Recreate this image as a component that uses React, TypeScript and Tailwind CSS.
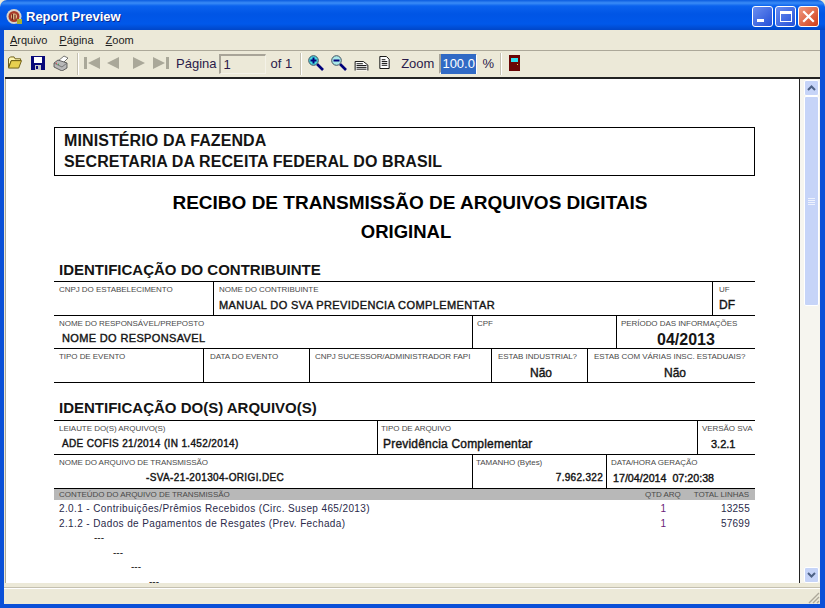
import type { ReactNode } from 'react';

function WindowButton({ className, children }: { className: string; children: ReactNode }) {
  return (
    <div className={`flex h-[21px] w-[21px] items-center justify-center rounded-[3px] border border-white ${className}`}>
      {children}
    </div>
  );
}

function TitleBar() {
  return (
    <div className="flex h-[30px] shrink-0 items-center rounded-t-[7px] bg-[linear-gradient(180deg,#0a5be0_0px,#3a8cf6_3px,#0a62ee_6px,#0055e5_14px,#0058ea_24px,#0046c8_30px)] pt-[2px] pr-[6px] pl-[6px]">
      <svg width="17" height="17" viewBox="0 0 17 17">
        <circle cx="8" cy="8.5" r="7.5" fill="#d8d4cc" />
        <circle cx="8" cy="8.5" r="5.5" fill="#a83a28" />
        <circle cx="8" cy="8.5" r="3" fill="#e8c890" />
        <path d="M6.5 6v6M9 6.5v5" stroke="#6a2018" strokeWidth="1.2" />
        <rect x="11" y="11" width="5" height="5" fill="#a8b030" />
      </svg>
      <span className="mt-[1px] ml-[3px] text-[13px] font-bold text-white [text-shadow:1px_1px_0_#0a2a90]">Report Preview</span>
      <div className="ml-auto flex gap-[2px]">
        <WindowButton className="bg-[linear-gradient(135deg,#6a8ef0,#2450d8)]">
          <div className="mt-[8px] mr-[5px] h-[3px] w-[7px] bg-white" />
        </WindowButton>
        <WindowButton className="bg-[linear-gradient(135deg,#6a8ef0,#2450d8)]">
          <div className="h-[11px] w-[12px] border border-t-[3px] border-white" />
        </WindowButton>
        <WindowButton className="bg-[linear-gradient(135deg,#f09a80,#d03c18)]">
          <svg width="13" height="13" viewBox="0 0 13 13">
            <path d="M2 2l9 9M11 2l-9 9" stroke="#fff" strokeWidth="2.2" strokeLinecap="square" />
          </svg>
        </WindowButton>
      </div>
    </div>
  );
}

function MenuItem({ first, rest }: { first: string; rest: string }) {
  return (
    <span className="text-[11px] text-[#1c1c1c]">
      <span className="underline">{first}</span>
      {rest}
    </span>
  );
}

function Separator({ ml, mr }: { ml: string; mr: string }) {
  return <div className={`h-[22px] w-[2px] border-x border-l-[#c4c0b0] border-r-white ${ml} ${mr}`} />;
}

function FolderIcon() {
  return (
    <svg width="16" height="13" viewBox="0 0 16 14">
      <path d="M1 3l2-2h4l1 2h6v2H4L1 12z" fill="#fff6b0" stroke="#6a5a10" />
      <path d="M1 13l3-8h11l-3 8z" fill="#e8d050" stroke="#6a5a10" />
    </svg>
  );
}

function SaveIcon() {
  return (
    <svg width="14" height="14" viewBox="0 0 14 14">
      <rect width="14" height="14" fill="#08087a" />
      <rect x="3" y="1" width="8" height="6" fill="#fff" />
      <rect x="4" y="9" width="6" height="5" fill="#c8c8c8" />
      <rect x="5" y="10" width="2" height="3" fill="#08087a" />
    </svg>
  );
}

function PrintIcon() {
  return (
    <svg width="16" height="16" viewBox="0 0 16 16">
      <path d="M5 6l6-5 4 2-5 5z" fill="#fff" stroke="#555" strokeWidth="0.8" />
      <path d="M1 8l4-3 9 3v5l-5 3-8-4z" fill="#b8b8b8" stroke="#444" strokeWidth="0.8" />
      <path d="M1 8l8 4 5-4" fill="none" stroke="#666" strokeWidth="0.8" />
      <path d="M3 8l1 .5" stroke="#e04040" />
      <path d="M5 9l1 .5" stroke="#30a040" />
    </svg>
  );
}

function NavIcon({ points, bar }: { points: string; bar?: number }) {
  return (
    <svg width="16" height="12" viewBox="0 0 16 13" preserveAspectRatio="none">
      {bar !== undefined && <rect x={bar} y="0" width="3" height="13" fill="#aaa899" />}
      <polygon points={points} fill="#aaa899" />
    </svg>
  );
}

function MagnifierIcon({ minus }: { minus?: boolean }) {
  return (
    <svg width="16" height="16" viewBox="0 0 16 16">
      <path d="M9 9l6 6" stroke="#00007a" strokeWidth="2.6" />
      <circle cx="5.5" cy="5.5" r="4.8" fill={minus ? '#a8e8e8' : '#48d8e0'} stroke="#405060" />
      <rect x="2.5" y="4.5" width="6" height="2" fill="#00007a" />
      {!minus && <rect x="4.5" y="2.5" width="2" height="6" fill="#00007a" />}
    </svg>
  );
}

function PageWidthIcon() {
  return (
    <svg width="15" height="10" viewBox="0 0 15 11">
      <path d="M.5 10.5V.5h9l5 4v6" fill="#fff" stroke="#000" />
      <path d="M2 3h7M2 5h11M2 7h11M2 9h11" stroke="#000" />
    </svg>
  );
}

function PageIcon() {
  return (
    <svg width="11" height="13" viewBox="0 0 11 14">
      <path d="M.5.5h7l3 3v10H.5z" fill="#fff" stroke="#000" />
      <path d="M2.5 4h4M2.5 6h6M2.5 8h6M2.5 10h6" stroke="#000" />
    </svg>
  );
}

function DoorIcon() {
  return (
    <svg width="11" height="16" viewBox="0 0 11 16">
      <rect width="11" height="16" fill="#6a0505" />
      <rect x="2" y="3" width="7" height="4" fill="#30e0f0" />
      <rect x="8" y="9" width="1" height="1" fill="#f0d040" />
    </svg>
  );
}

function Toolbar() {
  return (
    <div className="flex h-[27px] shrink-0 items-center border-t border-[#aca899] text-[13px] text-[#2a1a4a]">
      <div className="mb-[3px] ml-[3px] flex w-[16px] justify-center"><FolderIcon /></div>
      <div className="mb-[3px] ml-[8px] flex w-[14px] justify-center"><SaveIcon /></div>
      <div className="mb-[2px] ml-[8px]"><PrintIcon /></div>
      <Separator ml="ml-[8px]" mr="mr-[5px]" />
      <div className="mb-[3px]"><NavIcon points="16,0 16,13 4,6.5" bar={0} /></div>
      <div className="mb-[3px] ml-[5px]"><NavIcon points="14,0 14,13 2,6.5" /></div>
      <div className="mb-[3px] ml-[10px]"><NavIcon points="2,0 2,13 14,6.5" /></div>
      <div className="mb-[3px] ml-[6px]"><NavIcon points="0,0 0,13 12,6.5" bar={13} /></div>
      <span className="ml-[7px]">Página</span>
      <div className="ml-[3px] flex h-[20px] w-[47px] items-center border border-t-[2px] border-l-[2px] border-[#a8a498] border-r-[#f4f2e8] border-b-[#f4f2e8] pl-[2px]">1</div>
      <span className="ml-[4px]">of 1</span>
      <Separator ml="ml-[8px]" mr="mr-[6px]" />
      <div className="mb-[3px]"><MagnifierIcon /></div>
      <div className="mb-[3px] ml-[7px]"><MagnifierIcon minus /></div>
      <div className="mt-[4px] ml-[7px]"><PageWidthIcon /></div>
      <div className="mb-[3px] ml-[10px]"><PageIcon /></div>
      <span className="ml-[11px]">Zoom</span>
      <div className="ml-[5px] flex h-[20px] w-[38px] items-center border-2 border-[#a8a498] border-r-white border-b-white bg-white">
        <span className="bg-[#316ac5] px-[1px] text-white">100.0</span>
      </div>
      <span className="ml-[5px]">%</span>
      <Separator ml="ml-[6px]" mr="mr-[7px]" />
      <div className="mb-[2px]"><DoorIcon /></div>
    </div>
  );
}

function Cell({
  label,
  width,
  last,
  children,
  labelClass = 'pl-[5px]',
}: {
  label: string;
  width: string;
  last?: boolean;
  children?: ReactNode;
  labelClass?: string;
}) {
  return (
    <div className={`flex h-full flex-col ${width} ${last ? '' : 'border-r border-black'}`}>
      <div className={`mt-[3px] h-[10px] text-[8px] leading-[10px] tracking-[-0.05px] whitespace-nowrap text-[#4a4a4a] ${labelClass}`}>{label}</div>
      {children}
    </div>
  );
}

function Value({ className, children }: { className: string; children: ReactNode }) {
  return <div className={`whitespace-nowrap text-[#141414] [-webkit-text-stroke:0.4px_#141414] ${className}`}>{children}</div>;
}

function ArrowButton({ up }: { up?: boolean }) {
  return (
    <div className="flex h-[16px] w-[15px] items-center justify-center rounded-[2px] border border-white bg-[#c6d4f8]">
      <svg width="9" height="6" viewBox="0 0 9 6">
        <path d={up ? 'M1 5l3.5-3.5L8 5' : 'M1 1l3.5 3.5L8 1'} fill="none" stroke="#4d6185" strokeWidth="2" />
      </svg>
    </div>
  );
}

function Scrollbar() {
  return (
    <div className="flex w-[21px] shrink-0 flex-col border-l border-[#222] bg-[#f6f5ef] pt-[1px] pl-[4px]">
      <ArrowButton up />
      <div className="flex h-[210px] w-[15px] flex-col items-center justify-center gap-[1px] rounded-[2px] border border-white bg-[#c6d4f8]">
        <div className="h-[1px] w-[7px] bg-[#eef2fe]" />
        <div className="h-[1px] w-[7px] bg-[#eef2fe]" />
        <div className="h-[1px] w-[7px] bg-[#eef2fe]" />
        <div className="h-[1px] w-[7px] bg-[#eef2fe]" />
      </div>
      <div className="flex-1" />
      <ArrowButton />
    </div>
  );
}

function ContentRow({ text, qty, total }: { text: string; qty: string; total: string }) {
  return (
    <div className="flex h-[14.5px] items-center pl-[5px] text-[10px] whitespace-nowrap text-[#2a2a4a]">
      <span className="tracking-[0.38px]">{text}</span>
      <span className="ml-auto text-[#6a1a7a]">{qty}</span>
      <span className="mr-[5px] ml-[55px] tracking-[0.25px]">{total}</span>
    </div>
  );
}

function Report() {
  return (
    <div className="w-[701px] pt-[48px] leading-none">
      <div className="flex h-[49px] flex-col justify-center border border-black pb-[1px] pl-[9px] text-[16px] leading-[21px] font-bold tracking-[0.1px] text-[#141414]">
        <div>MINISTÉRIO DA FAZENDA</div>
        <div>SECRETARIA DA RECEITA FEDERAL DO BRASIL</div>
      </div>
      <div className="mt-[12px] text-center text-[19px] leading-[29px] font-bold text-black">
        <div className="pl-[11px]">RECIBO DE TRANSMISSÃO DE ARQUIVOS DIGITAIS</div>
        <div className="pl-[3px] text-[18.5px]">ORIGINAL</div>
      </div>

      <div className="mt-[15px] h-[20px] pl-[5px] text-[15px] leading-[18px] font-bold text-[#141414]">IDENTIFICAÇÃO DO CONTRIBUINTE</div>
      <div className="flex h-[34px] border-t border-black">
        <Cell label="CNPJ DO ESTABELECIMENTO" width="w-[160px]" />
        <Cell label="NOME DO CONTRIBUINTE" width="w-[499px]">
          <Value className="mt-[3px] pl-[5px] text-[11px] leading-[14px] tracking-[0.4px]">MANUAL DO SVA PREVIDENCIA COMPLEMENTAR</Value>
        </Cell>
        <Cell label="UF" width="w-[42px]" last labelClass="pl-[6px]">
          <Value className="mt-[3px] pl-[6px] text-[12px] leading-[14px]">DF</Value>
        </Cell>
      </div>
      <div className="flex h-[33px] border-t border-black">
        <Cell label="NOME DO RESPONSÁVEL/PREPOSTO" width="w-[419px]">
          <Value className="mt-[2px] pl-[8px] text-[11px] leading-[14px] tracking-[0.35px]">NOME DO RESPONSAVEL</Value>
        </Cell>
        <Cell label="CPF" width="w-[144px]" labelClass="pl-[4px]" />
        <Cell label="PERÍODO DAS INFORMAÇÕES" width="w-[138px]" last labelClass="pl-[4px]">
          <div className="mt-[2px] pl-[40px] text-[16px] leading-[18px] font-bold text-[#141414]">04/2013</div>
        </Cell>
      </div>
      <div className="flex h-[35px] border-y border-black">
        <Cell label="TIPO DE EVENTO" width="w-[150px]" />
        <Cell label="DATA DO EVENTO" width="w-[106px]" labelClass="pl-[6px]" />
        <Cell label="CNPJ SUCESSOR/ADMINISTRADOR FAPI" width="w-[182px]" labelClass="pl-[5px]" />
        <Cell label="ESTAB INDUSTRIAL?" width="w-[96px]" labelClass="pl-[6px]">
          <Value className="mt-[4px] pl-[38px] text-[12px] leading-[14px]">Não</Value>
        </Cell>
        <Cell label="ESTAB COM VÁRIAS INSC. ESTADUAIS?" width="w-[167px]" last labelClass="pl-[6px]">
          <Value className="mt-[4px] pl-[76px] text-[12px] leading-[14px]">Não</Value>
        </Cell>
      </div>

      <div className="mt-[16px] h-[21px] pl-[5px] text-[15px] leading-[18px] font-bold text-[#141414]">IDENTIFICAÇÃO DO(S) ARQUIVO(S)</div>
      <div className="flex h-[34px] border-t border-black">
        <Cell label="LEIAUTE DO(S) ARQUIVO(S)" width="w-[324px]">
          <Value className="mt-[3px] pl-[8px] text-[10px] leading-[14px] tracking-[0.35px]">ADE COFIS 21/2014 (IN 1.452/2014)</Value>
        </Cell>
        <Cell label="TIPO DE ARQUIVO" width="w-[320px]" labelClass="pl-[3px]">
          <Value className="mt-[3px] pl-[5px] text-[12px] leading-[14px] tracking-[0.2px]">Previdência Complementar</Value>
        </Cell>
        <Cell label="VERSÃO SVA" width="w-[57px]" last labelClass="pl-[4px]">
          <Value className="mt-[3px] pl-[13px] text-[11px] leading-[14px]">3.2.1</Value>
        </Cell>
      </div>
      <div className="flex h-[34px] border-t border-black">
        <Cell label="NOME DO ARQUIVO DE TRANSMISSÃO" width="w-[419px]">
          <Value className="mt-[3px] pl-[92px] text-[10px] leading-[14px] tracking-[0.37px]">-SVA-21-201304-ORIGI.DEC</Value>
        </Cell>
        <Cell label="TAMANHO (Bytes)" width="w-[134px]" labelClass="pl-[3px]">
          <Value className="mt-[3px] pr-[3px] text-right text-[10px] leading-[14px] tracking-[0.3px]">7.962.322</Value>
        </Cell>
        <Cell label="DATA/HORA GERAÇÃO" width="w-[148px]" last labelClass="pl-[4px]">
          <Value className="mt-[3px] pl-[6px] text-[10.7px] leading-[14px]">17/04/2014&nbsp;&nbsp;07:20:38</Value>
        </Cell>
      </div>
      <div className="flex h-[12px] items-center border-t border-black bg-[#b8b8b8] pl-[5px] text-[8px] tracking-[-0.05px] whitespace-nowrap text-[#4a4a4a]">
        <span>CONTEÚDO DO ARQUIVO DE TRANSMISSÃO</span>
        <span className="ml-auto">QTD ARQ</span>
        <span className="mr-[6px] ml-[13px]">TOTAL LINHAS</span>
      </div>
      <div className="mt-[2px]">
        <ContentRow text="2.0.1 - Contribuições/Prêmios Recebidos (Circ. Susep 465/2013)" qty="1" total="13255" />
        <ContentRow text="2.1.2 - Dados de Pagamentos de Resgates (Prev. Fechada)" qty="1" total="57699" />
      </div>
      <div className="h-[14.5px] pl-[40px] text-[10px] leading-[14.5px] text-[#222]">---</div>
      <div className="h-[14.5px] pl-[59px] text-[10px] leading-[14.5px] text-[#222]">---</div>
      <div className="h-[14.5px] pl-[77px] text-[10px] leading-[14.5px] text-[#222]">---</div>
      <div className="h-[14.5px] pl-[95px] text-[10px] leading-[14.5px] text-[#222]">---</div>
    </div>
  );
}

export default function App() {
  return (
    <div className="flex h-[608px] w-[825px] flex-col overflow-hidden bg-[#ece9d8] font-['Liberation_Sans',Arial,sans-serif]">
      <TitleBar />
      <div className="flex min-h-0 flex-1 flex-col border-r-[5px] border-b-[4px] border-l-[4px] border-[#0a50d8]">
        <div className="flex h-[20px] shrink-0 items-center gap-[12px] pl-[6px]">
          <MenuItem first="A" rest="rquivo" />
          <MenuItem first="P" rest="ágina" />
          <MenuItem first="Z" rest="oom" />
        </div>
        <Toolbar />
        <div className="ml-[1px] flex h-[506px] shrink-0 border-t-2 border-[#222]">
          <div className="h-full min-w-0 flex-1 overflow-hidden border-l border-[#aca899] bg-white pl-[48px]">
            <Report />
          </div>
          <Scrollbar />
        </div>
        <div className="mt-[4px] flex flex-1 items-end justify-end border-t border-[#c4c0b0] shadow-[inset_0_1px_0_#fff]">
          <svg width="13" height="13" viewBox="0 0 13 13">
            <path d="M12 2L2 12M12 6L6 12M12 10l-2 2" stroke="#aca899" strokeWidth="1.4" />
          </svg>
        </div>
      </div>
    </div>
  );
}
